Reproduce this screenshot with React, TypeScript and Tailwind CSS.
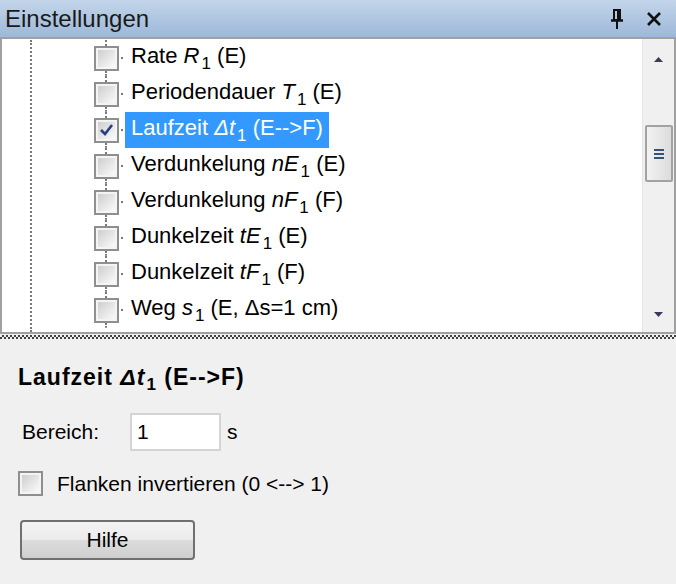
import React from 'react';

type Row = { pre: string; v: string; post: string; checked?: boolean; selected?: boolean };

const rows: Row[] = [
  { pre: 'Rate ', v: 'R', post: ' (E)' },
  { pre: 'Periodendauer ', v: 'T', post: ' (E)' },
  { pre: 'Laufzeit ', v: 'Δt', post: ' (E-->F)', checked: true, selected: true },
  { pre: 'Verdunkelung ', v: 'nE', post: ' (E)' },
  { pre: 'Verdunkelung ', v: 'nF', post: ' (F)' },
  { pre: 'Dunkelzeit ', v: 'tE', post: ' (E)' },
  { pre: 'Dunkelzeit ', v: 'tF', post: ' (F)' },
  { pre: 'Weg ', v: 's', post: ' (E, Δs=1 cm)' },
];

function CheckBox({ checked = false }: { checked?: boolean }) {
  return (
    <div className="w-[25px] h-[25px] shrink-0 border-2 border-[#8e8f8f] bg-[#f4f4f4] p-[2px]">
      <div className="w-full h-full bg-gradient-to-br from-[#cecece] to-[#fbfbfb] flex items-center justify-center">
        {checked && (
          <svg width="15" height="14" viewBox="0 0 15 14">
            <path d="M2 7 L6 11 L13 2" fill="none" stroke="#2a3f84" strokeWidth="2.6" />
          </svg>
        )}
      </div>
    </div>
  );
}

function Label({ r }: { r: Row }) {
  return (
    <span className="whitespace-pre">
      {r.pre}
      <i>{r.v}</i>
      <span className="text-[17px] align-[-6px] ml-[2px]">1</span>
      {r.post}
    </span>
  );
}

export default function App() {
  return (
    <div className="w-[676px] h-[584px] bg-[#f0f0f0] flex flex-col font-['Liberation_Sans',Arial,sans-serif] text-black overflow-hidden">
      {/* Title bar */}
      <div className="h-[37px] shrink-0 bg-gradient-to-b from-[#c3d5ea] to-[#9db8d8] flex items-center pl-[5px] pr-[14px]">
        <span className="text-[24px] text-[#1a1a1a] flex-1 leading-none">Einstellungen</span>
        <svg width="14" height="20" viewBox="0 0 14 20" className="mr-[22px]">
          <path d="M4 1 H10 V11 H4 Z" fill="none" stroke="#111" strokeWidth="2" />
          <path d="M8 1 V11" stroke="#111" strokeWidth="2" />
          <path d="M1 11.5 H13" stroke="#111" strokeWidth="2.5" />
          <path d="M7 12 V20" stroke="#111" strokeWidth="2" />
        </svg>
        <svg width="16" height="16" viewBox="0 0 16 16">
          <path d="M2 2 L14 14 M14 2 L2 14" stroke="#111" strokeWidth="2.6" />
        </svg>
      </div>

      {/* Tree panel */}
      <div className="h-[297px] shrink-0 border-2 border-[#a0a0a0] bg-white flex">
        <div className="flex-1 flex pt-[1px]">
          <div className="w-[28px] shrink-0" />
          <div className="w-[2px] border-l-2 border-dotted border-[#7a7a7a]" />
          <div className="flex flex-col">
            {rows.map((r, i) => (
              <div key={i} className="h-[36px] flex items-stretch text-[22px]">
                <div className="w-[61px] shrink-0" />
                <div className="w-[26px] shrink-0 flex flex-col items-center">
                  <div className="flex-1 border-l-2 border-dotted border-[#7a7a7a]" />
                  <CheckBox checked={r.checked} />
                  <div className="flex-1 border-l-2 border-dotted border-[#7a7a7a]" />
                </div>
                <div className="flex items-center">
                  <div className="w-[2px] h-[2px] bg-[#7a7a7a] ml-[2px] mr-[2px]" />
                </div>
                <div
                  className={`flex items-center px-[6px] ${r.selected ? 'bg-[#3399ff] text-white' : ''}`}
                >
                  <Label r={r} />
                </div>
              </div>
            ))}
          </div>
        </div>
        {/* Scrollbar */}
        <div className="w-[32px] shrink-0 bg-[#f0f0f0] border-l border-[#e6e6e6] flex flex-col items-center">
          <div className="h-[40px] w-full flex items-center justify-center">
            <svg width="9" height="5" viewBox="0 0 9 5">
              <path d="M0 5 L4.5 0 L9 5 Z" fill="#3a3a5a" />
            </svg>
          </div>
          <div className="h-[46px]" />
          <div className="w-[28px] h-[57px] rounded-[2px] border-2 border-[#a2a2a2] bg-gradient-to-r from-[#f2f2f2] to-[#dcdcdc] flex flex-col items-center justify-center gap-[2px]">
            <div className="w-[10px] h-[2px] bg-[#37527a]" />
            <div className="w-[10px] h-[2px] bg-[#37527a]" />
            <div className="w-[10px] h-[2px] bg-[#37527a]" />
          </div>
          <div className="flex-1" />
          <div className="h-[36px] w-full flex items-center justify-center">
            <svg width="9" height="5" viewBox="0 0 9 5">
              <path d="M0 0 L9 0 L4.5 5 Z" fill="#3a3a5a" />
            </svg>
          </div>
        </div>
      </div>

      {/* Splitter */}
      <div className="h-[4px] shrink-0 mt-[1px] bg-[repeating-conic-gradient(#404040_0_25%,#f0f0f0_0_50%)] bg-[length:4px_4px]" />

      {/* Detail section */}
      <div className="flex flex-col pl-[18px] pt-[27px] text-[21px]">
        <div className="font-bold text-[23px] tracking-[1px] leading-none h-[25px] whitespace-pre">
          Laufzeit <i>Δt</i>
          <span className="text-[17px] align-[-5px] ml-[1px]">1</span> (E--&gt;F)
        </div>
        <div className="flex items-center mt-[22px] h-[38px]">
          <span className="w-[112px] pl-[4px]">Bereich:</span>
          <div className="w-[91px] h-[38px] bg-white border-2 border-[#d4d4d4] flex items-center pl-[5px]">1</div>
          <span className="ml-[6px]">s</span>
        </div>
        <div className="flex items-center mt-[20px] h-[25px]">
          <CheckBox />
          <span className="ml-[14px]">Flanken invertieren (0 &lt;--&gt; 1)</span>
        </div>
        <button className="mt-[24px] ml-[2px] w-[175px] h-[40px] rounded-[4px] border-2 border-[#707070] bg-[linear-gradient(#f4f4f4,#ebebeb_50%,#dcdcdc_50%,#cfcfcf)] text-[21px] flex items-center justify-center">
          Hilfe
        </button>
      </div>
    </div>
  );
}
